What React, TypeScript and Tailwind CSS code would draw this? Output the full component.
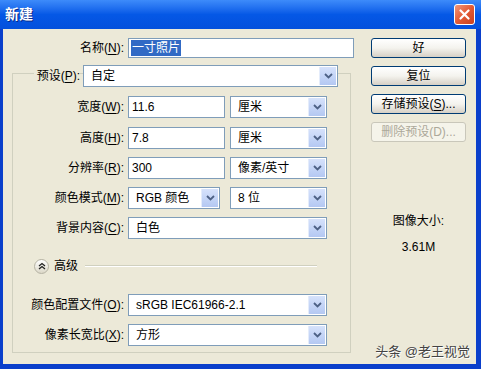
import React from "react";

const FONT = { fontFamily: '"Liberation Sans", "Noto Sans CJK SC", sans-serif' };

function Key({ k }: { k: string }) {
  return <span className="underline underline-offset-[2px]">{k}</span>;
}

function Label({ text, k, after = "" }: { text: string; k: string; after?: string }) {
  return (
    <span>
      {text}(<Key k={k} />){after}:
    </span>
  );
}

function Arrow() {
  return (
    <div className="w-[17px] h-full bg-gradient-to-b from-[#D6E2FB] to-[#B4C8F2] border-l border-[#E4ECFB] flex items-center justify-center">
      <svg width="9" height="6" viewBox="0 0 9 6">
        <path d="M1 1 L4.5 4.5 L8 1" stroke="#4D6185" strokeWidth="1.8" fill="none" />
      </svg>
    </div>
  );
}

function Select({ value, w }: { value: string; w: string }) {
  return (
    <div className={`${w} h-[22px] bg-white border border-[#7F9DB9] flex items-stretch p-px`}>
      <div className="flex-1 pl-[6px] flex items-center text-[12px] text-black whitespace-nowrap">{value}</div>
      <Arrow />
    </div>
  );
}

function Input({ value, w }: { value: string; w: string }) {
  return (
    <div className={`${w} h-[22px] bg-white border border-[#7F9DB9] flex items-center pl-[3px] text-[12px] text-black`}>
      {value}
    </div>
  );
}

function Row({ label, children, mt }: { label: React.ReactNode; children: React.ReactNode; mt: string }) {
  return (
    <div className={`flex items-center ${mt}`}>
      <div className="w-[112px] text-right text-[12px] text-black pr-[1px]">{label}</div>
      <div className="ml-[3px] flex gap-[5px]">{children}</div>
    </div>
  );
}

function XpButton({ children, disabled }: { children: React.ReactNode; disabled?: boolean }) {
  return (
    <button
      className={
        disabled
          ? "w-[95px] h-[20px] rounded-[3px] border border-[#C9C7BA] bg-[#F5F4EA] text-[12px] text-[#ACA899]"
          : "w-[95px] h-[20px] rounded-[3px] border border-[#003C74] bg-gradient-to-b from-white via-[#F4F3EE] to-[#D6D0C5] text-[12px] text-black"
      }
    >
      {children}
    </button>
  );
}

export default function App() {
  return (
    <div style={FONT} className="w-[481px] h-[369px] bg-[#0A3FCB] flex flex-col overflow-hidden">
      {/* title bar */}
      <div className="h-[29px] bg-gradient-to-b from-[#3D8BFA] via-[#0558E6] to-[#0450DC] flex items-center justify-between pl-[5px] pr-[6px]">
        <span className="text-white font-bold text-[14px] [text-shadow:1px_1px_0_#0A2A8A]">新建</span>
        <div className="w-[21px] h-[21px] rounded-[3px] border border-white bg-gradient-to-br from-[#F0967A] via-[#E35A34] to-[#C8401E] flex items-center justify-center">
          <svg width="11" height="11" viewBox="0 0 11 11">
            <path d="M1.5 1.5 L9.5 9.5 M9.5 1.5 L1.5 9.5" stroke="white" strokeWidth="2.2" strokeLinecap="round" />
          </svg>
        </div>
      </div>

      {/* body */}
      <div className="relative flex-1 ml-[3px] mr-[5px] mb-[5px] bg-[#ECE9D8] flex">
        <div className="w-[368px] flex flex-col">
          {/* name */}
          <div className="flex items-center mt-[9px]">
            <div className="w-[122px] text-right text-[12px] text-black pr-[1px]">
              <Label text="名称" k="N" />
            </div>
            <div className="ml-[3px] w-[226px] h-[20px] bg-white border border-[#7F9DB9] flex items-center pl-[2px]">
              <span className="bg-[#316AC5] text-white text-[12px] leading-[16px] px-px">一寸照片</span>
            </div>
          </div>

          {/* group box */}
          <div className="ml-[9px] mt-[15px] w-[339px] h-[280px] border border-[#D0D0BF] flex flex-col">
            <div className="flex items-center mt-[-9px]">
              <div className="w-[67px] flex justify-end">
                <span className="bg-[#ECE9D8] pl-[3px] text-[12px] text-black">
                  <Label text="预设" k="P" />
                </span>
              </div>
              <div className="ml-[3px]">
                <Select value="自定" w="w-[255px]" />
              </div>
            </div>

            <Row label={<Label text="宽度" k="W" />} mt="mt-[9px]">
              <Input value="11.6" w="w-[97px]" />
              <Select value="厘米" w="w-[97px]" />
            </Row>
            <Row label={<Label text="高度" k="H" />} mt="mt-[9px]">
              <Input value="7.8" w="w-[97px]" />
              <Select value="厘米" w="w-[97px]" />
            </Row>
            <Row label={<Label text="分辨率" k="R" />} mt="mt-[8px]">
              <Input value="300" w="w-[97px]" />
              <Select value="像素/英寸" w="w-[97px]" />
            </Row>
            <Row label={<Label text="颜色模式" k="M" />} mt="mt-[8px]">
              <Select value="RGB 颜色" w="w-[92px]" />
              <div className="w-0" />
              <Select value="8 位" w="w-[97px]" />
            </Row>
            <Row label={<Label text="背景内容" k="C" />} mt="mt-[8px]">
              <Select value="白色" w="w-[199px]" />
            </Row>

            {/* advanced */}
            <div className="flex items-center mt-[19px] ml-[21px] h-[16px]">
              <div className="w-[15px] h-[15px] rounded-full border border-[#B5B2A3] bg-gradient-to-b from-white to-[#DCD8C8] flex items-center justify-center">
                <svg width="8" height="8" viewBox="0 0 8 8">
                  <path d="M1 4 L4 1.5 L7 4 M1 7 L4 4.5 L7 7" stroke="#222" strokeWidth="1.3" fill="none" />
                </svg>
              </div>
              <span className="ml-[5px] text-[12px] text-black">高级</span>
              <div className="ml-[7px] w-[232px] border-t border-[#D0D0BF] border-b border-b-white" />
            </div>

            <Row label={<Label text="颜色配置文件" k="O" />} mt="mt-[20px]">
              <Select value="sRGB IEC61966-2.1" w="w-[199px]" />
            </Row>
            <Row label={<Label text="像素长宽比" k="X" />} mt="mt-[8px]">
              <Select value="方形" w="w-[199px]" />
            </Row>
          </div>
        </div>

        {/* right column */}
        <div className="w-[95px] flex flex-col mt-[9px] gap-[8px]">
          <XpButton>好</XpButton>
          <XpButton>复位</XpButton>
          <XpButton>
            存储预设(<Key k="S" />)...
          </XpButton>
          <XpButton disabled>删除预设(D)...</XpButton>
          <div className="mt-[62px] flex flex-col items-center text-[12px] text-black">
            <span>图像大小:</span>
            <span className="mt-[8px]">3.61M</span>
          </div>
        </div>

        {/* watermark */}
        <div className="absolute right-[6px] bottom-[3px] text-[13px] text-[#444] [text-shadow:1px_1px_0_#fff]">
          头条 @老王视觉
        </div>
      </div>
    </div>
  );
}
